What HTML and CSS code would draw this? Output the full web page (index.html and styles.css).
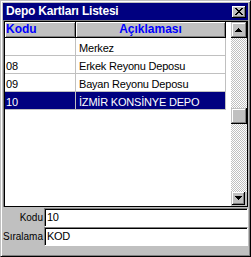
FILE: index.html
```html
<!DOCTYPE html>
<html>
<head>
<meta charset="utf-8">
<link rel="stylesheet" href="styles.css">
</head>
<body>
<div class="window">
  <div class="titlebar">
    <span class="title">Depo Kartları Listesi</span>
    <div class="close">
      <svg width="8" height="7" viewBox="0 0 8 7" shape-rendering="crispEdges">
        <path d="M0 0h2v1h-2zM6 0h2v1h-2zM1 1h2v1h-2zM5 1h2v1h-2zM2 2h4v1h-4zM3 3h2v1h-2zM2 4h4v1h-4zM1 5h2v1h-2zM5 5h2v1h-2zM0 6h2v1h-2zM6 6h2v1h-2z" fill="#000"/>
      </svg>
    </div>
  </div>
  <div class="grid">
    <div class="grid-inner">
      <div class="table">
        <div class="row head">
          <div class="cell c1">Kodu</div>
          <div class="cell c2">Açıklaması</div>
        </div>
        <div class="row">
          <div class="cell c1"></div>
          <div class="cell c2">Merkez</div>
        </div>
        <div class="row">
          <div class="cell c1">08</div>
          <div class="cell c2">Erkek Reyonu Deposu</div>
        </div>
        <div class="row">
          <div class="cell c1">09</div>
          <div class="cell c2">Bayan Reyonu Deposu</div>
        </div>
        <div class="row selected">
          <div class="cell c1">10</div>
          <div class="cell c2">İZMİR KONSİNYE DEPO</div>
        </div>
      </div>
      <div class="scrollbar">
        <div class="sbtn">
          <svg width="7" height="4" viewBox="0 0 7 4" shape-rendering="crispEdges"><path d="M3 0h1v1h-1zM2 1h3v1h-3zM1 2h5v1h-5zM0 3h7v1h-7z" fill="#000"/></svg>
        </div>
        <div class="track">
          <div class="thumb"></div>
        </div>
        <div class="sbottom">
          <div class="sbtn small">
            <svg width="7" height="4" viewBox="0 0 7 4" shape-rendering="crispEdges"><path d="M0 0h7v1h-7zM1 1h5v1h-5zM2 2h3v1h-3zM3 3h1v1h-1z" fill="#000"/></svg>
          </div>
        </div>
      </div>
    </div>
  </div>
  <div class="form">
    <div class="frow">
      <div class="label">Kodu</div>
      <div class="input">10</div>
    </div>
    <div class="frow">
      <div class="label">Sıralama</div>
      <div class="input">KOD</div>
    </div>
  </div>
</div>
</body>
</html>
```
FILE: styles.css
```css
* { box-sizing: border-box; }
body {
  margin: 0;
  background: #c0c0c0;
  font-family: "Liberation Sans", Arial, sans-serif;
  font-size: 11px;
  color: #000;
}
.window {
  width: 251px;
  height: 257px;
  display: flex;
  flex-direction: column;
  padding: 2px;
  border: 1px solid;
  border-color: #c0c0c0 #000 #000 #c0c0c0;
  box-shadow: inset 1px 1px #fff, inset -1px -1px #808080;
  background: #c0c0c0;
}
.titlebar {
  height: 17px;
  flex: none;
  background: #000080;
  color: #fff;
  font-weight: bold;
  font-size: 12px;
  display: flex;
  align-items: center;
  justify-content: space-between;
  padding: 0 2px 0 3px;
}
.title { line-height: 17px; letter-spacing: -0.2px; }
.close {
  width: 14px;
  height: 12px;
  background: #c0c0c0;
  box-shadow: inset -1px -1px #000, inset 1px 1px #fff, inset -2px -2px #808080;
  display: flex;
  align-items: center;
  justify-content: center;
  padding-right: 1px;
}
.close svg { display: block; }
.grid {
  height: 187px;
  flex: none;
  border-top: 1px solid #808080;
  border-left: 1px solid #808080;
  display: flex;
}
.grid-inner {
  flex: 1;
  display: flex;
  border: 1px solid #000;
  background: #fff;
}
.table {
  flex: 1;
  display: flex;
  flex-direction: column;
}
.row {
  display: flex;
  height: 18px;
}
.cell {
  height: 18px;
  padding-top: 2px;
  line-height: 17px;
  letter-spacing: -0.2px;
  border-right: 1px solid #c0c0c0;
  border-bottom: 1px solid #c0c0c0;
  white-space: nowrap;
  overflow: hidden;
}
.c1 { width: 71px; padding-left: 1px; }
.c2 { width: 150px; padding-left: 3px; }
.head { height: 16px; }
.head .cell {
  height: 16px;
  padding-top: 0;
  line-height: 15px;
  letter-spacing: 0;
  background: #c0c0c0;
  border-right: 1px solid #000;
  border-bottom: 1px solid #000;
  box-shadow: inset 1px 1px #fff, inset -1px -1px #808080;
  color: #0000ff;
  font-weight: bold;
  font-size: 12px;
}
.head .c2 { text-align: center; padding-left: 0; }
.selected .cell {
  background: #000080;
  color: #fff;
}
.scrollbar {
  width: 16px;
  flex: none;
  display: flex;
  flex-direction: column;
}
.sbtn {
  height: 16px;
  flex: none;
  background: #c0c0c0;
  box-shadow: inset -1px -1px #000, inset 1px 1px #c0c0c0, inset -2px -2px #808080, inset 2px 2px #fff;
  display: flex;
  align-items: center;
  justify-content: center;
  padding: 0 1px 1px 0;
}
.sbtn svg { display: block; }
.track {
  flex: 1;
  background: repeating-conic-gradient(#c0c0c0 0 25%, #fff 0 50%) 0 0 / 2px 2px;
  padding-top: 70px;
}
.thumb {
  height: 16px;
  background: #c0c0c0;
  box-shadow: inset -1px -1px #000, inset 1px 1px #c0c0c0, inset -2px -2px #808080, inset 2px 2px #fff;
}
.sbottom {
  height: 14px;
  flex: none;
  display: flex;
  background: #c0c0c0;
  padding-left: 1px;
}
.sbtn.small {
  width: 13px;
  height: 13px;
  box-shadow: inset -1px -1px #000, inset 1px 1px #fff, inset -2px -2px #808080;
}
.form {
  margin-top: 1px;
  display: flex;
  flex-direction: column;
}
.frow {
  display: flex;
  height: 19px;
}
.label {
  width: 41px;
  flex: none;
  text-align: right;
  padding-right: 1px;
  font-size: 10px;
  line-height: 19px;
  white-space: nowrap;
}
.input {
  flex: 1;
  background: #fff;
  border-top: 1px solid #808080;
  border-left: 1px solid #808080;
  border-bottom: 1px solid #fff;
  border-right: 1px solid #fff;
  box-shadow: inset 1px 1px #000;
  padding-left: 2px;
  line-height: 17px;
  letter-spacing: -0.3px;
}
```
